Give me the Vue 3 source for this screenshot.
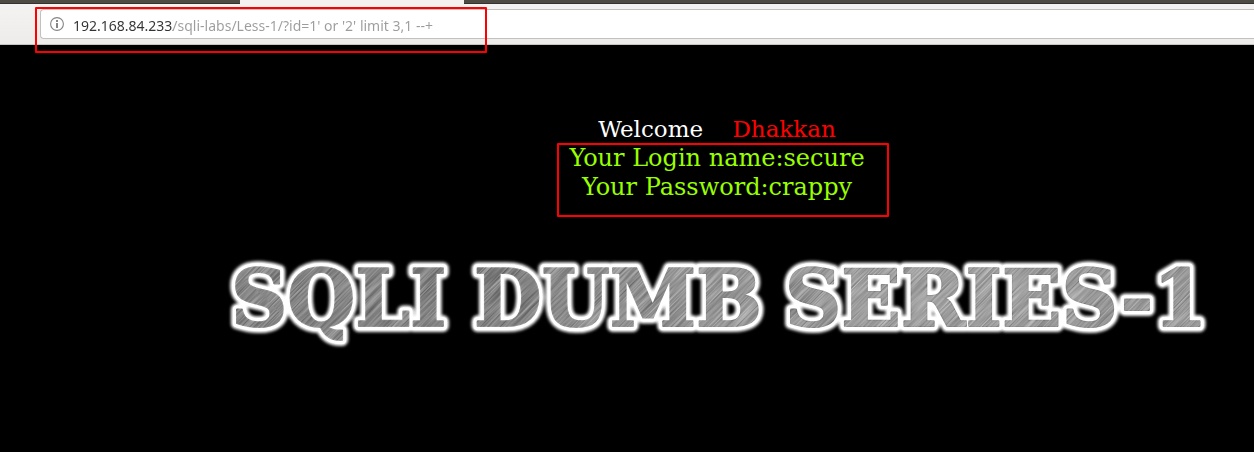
<script setup>
import { ref } from 'vue'

const address = ref("192.168.84.233/sqli-labs/Less-1/?id=1' or '2' limit 3,1 --+")
const words = [
  { text: 'SQLI', x: 14 },
  { text: 'DUMB', x: 257 },
  { text: 'SERIES-1', x: 568 },
]
</script>

<template>
  <div class="window">
    <div class="tabs">
      <div class="tab-active"></div>
    </div>
    <div class="toolbar">
      <form class="address-bar" @submit.prevent>
        <button class="info" type="button" aria-label="Site information">
          <svg width="14" height="14" viewBox="0 0 14 14">
            <circle cx="7" cy="7" r="6.4" fill="none" stroke="#858585" stroke-width="1.1" />
            <rect x="6" y="3" width="2" height="2" fill="#858585" />
            <rect x="6" y="6" width="2" height="5" fill="#858585" />
          </svg>
        </button>
        <input v-model="address" class="address" type="text" aria-label="Address" spellcheck="false" />
      </form>
    </div>
    <div class="mark mark-address"></div>

    <main class="page">
      <p class="line welcome">Welcome&nbsp;&nbsp;&nbsp;&nbsp;<span class="name">Dhakkan</span></p>
      <div class="result">
        <p class="line">Your Login name:secure</p>
        <p class="line">Your Password:crappy</p>
        <div class="mark mark-result"></div>
      </div>
      <h1 class="banner">
        <svg width="1000" height="100" viewBox="0 0 1000 100" role="img" aria-label="SQLI DUMB SERIES-1">
          <defs>
            <filter id="grain" x="0" y="0" width="1" height="1" color-interpolation-filters="sRGB">
              <feTurbulence type="fractalNoise" baseFrequency="0.02 0.7" numOctaves="3" seed="4" />
              <feColorMatrix values="0.5 0 0 0 0.32  0.5 0 0 0 0.32  0.5 0 0 0 0.32  0 0 0 0 1" />
            </filter>
            <pattern id="metal" width="1600" height="1600" patternUnits="userSpaceOnUse" patternTransform="rotate(-45)">
              <rect width="1600" height="1600" filter="url(#grain)" />
            </pattern>
            <linearGradient id="sheen" gradientUnits="userSpaceOnUse" x1="0" y1="0" x2="1000" y2="60">
              <stop offset="0" stop-color="#000" stop-opacity="0.06" />
              <stop offset="0.3" stop-color="#000" stop-opacity="0.1" />
              <stop offset="0.52" stop-color="#fff" stop-opacity="0.06" />
              <stop offset="0.7" stop-color="#fff" stop-opacity="0.14" />
              <stop offset="1" stop-color="#fff" stop-opacity="0.06" />
            </linearGradient>
            <filter id="soft" x="-5%" y="-30%" width="110%" height="160%">
              <feGaussianBlur stdDeviation="1.6" />
            </filter>
          </defs>
          <g class="lettering">
            <g class="glow" filter="url(#soft)" aria-hidden="true">
              <text v-for="w in words" :key="w.text" :x="w.x" y="76">{{ w.text }}</text>
            </g>
            <g class="rim" aria-hidden="true">
              <text v-for="w in words" :key="w.text" :x="w.x" y="76">{{ w.text }}</text>
            </g>
            <g class="face">
              <text v-for="w in words" :key="w.text" :x="w.x" y="76">{{ w.text }}</text>
            </g>
            <g class="sheen" aria-hidden="true">
              <text v-for="w in words" :key="w.text" :x="w.x" y="76">{{ w.text }}</text>
            </g>
          </g>
        </svg>
      </h1>
    </main>
  </div>
</template>

<style>
html,
body {
  margin: 0;
  background: #000;
}
</style>

<style scoped>
.window {
  position: relative;
  min-height: 100vh;
  overflow: hidden;
  background: #000;
}

.tabs {
  height: 4px;
  box-sizing: border-box;
  padding-left: 240px;
  background: linear-gradient(#4d4b44 3px, #34332f 3px);
}

.tab-active {
  width: 224px;
  height: 4px;
  background: #f3f2f1;
}

.toolbar {
  padding: 5px 0 5px 40px;
  border-bottom: 1px solid #c6c4c2;
  background: linear-gradient(#f4f3f1, #edecea);
}

.address-bar {
  display: flex;
  align-items: center;
  height: 28px;
  padding-left: 9px;
  border: 1px solid #c3c1bf;
  border-right: 0;
  border-radius: 4px 0 0 4px;
  background: #fff;
}

.info {
  display: flex;
  margin: 0 9px 0 0;
  padding: 0;
  border: 0;
  background: none;
}

.address {
  flex: 1;
  min-width: 0;
  height: 28px;
  box-sizing: border-box;
  padding: 2px 0 0;
  border: 0;
  outline: 0;
  background: linear-gradient(to right, #333 100px, #9c9c9c 100px);
  -webkit-background-clip: text;
  background-clip: text;
  color: transparent;
  font: 14px/26px "Noto Sans", "Open Sans", sans-serif;
}

.mark {
  position: absolute;
  box-sizing: border-box;
  border: 2px solid #f00;
  border-radius: 1px;
  pointer-events: none;
}

.mark-address {
  top: 7px;
  left: 35px;
  width: 452px;
  height: 46px;
}

.page {
  display: flex;
  flex-direction: column;
  align-items: center;
  padding: 70px 0 0 180px;
  color: #9f0;
  font: 24px/29px "DejaVu Serif", serif;
}

.line {
  margin: 0;
  text-align: center;
  white-space: nowrap;
}

.welcome {
  color: #fff;
  font-size: 23px;
}

.name {
  color: #f00;
}

.result {
  position: relative;
}

.mark-result {
  top: -1px;
  left: -12px;
  width: 332px;
  height: 74px;
}

.banner {
  display: flex;
  margin: 48px 0 0;
}

.lettering {
  font: bold 78px "DejaVu Serif", serif;
  stroke-linejoin: round;
}

.glow {
  fill: #fff;
  stroke: #fff;
  stroke-width: 12px;
}

.rim {
  fill: #fff;
  stroke: #fff;
  stroke-width: 8px;
}

.face {
  fill: url(#metal);
  stroke: url(#metal);
  stroke-width: 2px;
}

.sheen {
  fill: url(#sheen);
}
</style>
